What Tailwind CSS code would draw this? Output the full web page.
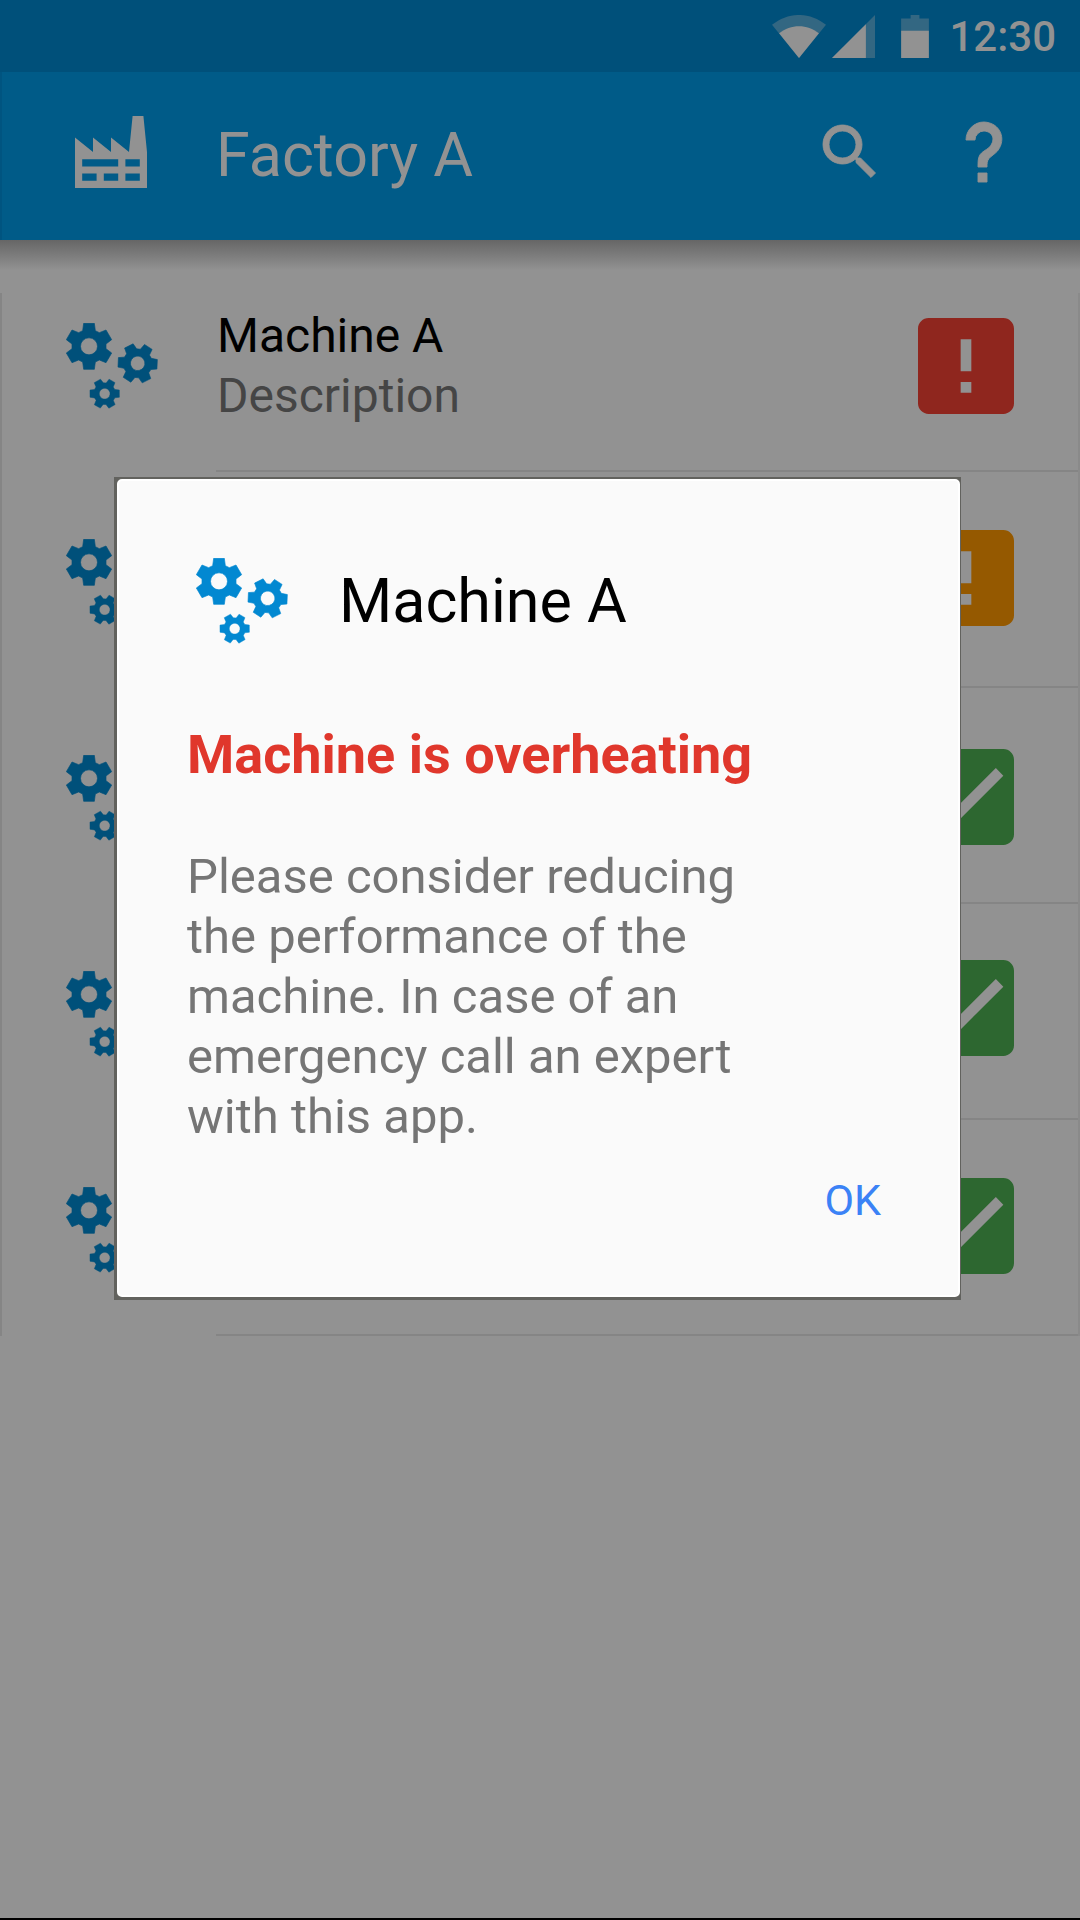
<!DOCTYPE html>
<html lang="en">
<head>
<meta charset="utf-8">
<meta name="viewport" content="width=device-width, initial-scale=1">
<title>Factory A</title>
<script src="https://cdn.jsdelivr.net/npm/@tailwindcss/browser@4"></script>
</head>
<body class="relative flex min-h-screen flex-col border-b-2 border-black bg-[#929292] font-['Roboto',sans-serif] text-black">

<!-- Shared symbols -->
<svg class="hidden" aria-hidden="true">
  <symbol id="gear" viewBox="-70 -70 140 140" overflow="visible">
    <path fill-rule="evenodd" stroke="currentColor" stroke-width="2" stroke-linejoin="round" d="M-16-69H16L19-47L31-41L51-49L68-20L51-7V7L68 20L51 49L31 41L19 47L16 69H-16L-19 47L-31 41L-51 49L-68 20L-51 7V-7L-68-20L-51-49L-31-41L-19-47ZM0-25.500A25.500 25.500 0 1 0 0 25.500A25.500 25.500 0 1 0 0-25.500Z"/>
  </symbol>
  <symbol id="gears" viewBox="198 130 276 258">
    <use href="#gear" x="-70" y="-70" width="140" height="140" transform="translate(267 200)"/>
    <use href="#gear" x="-70" y="-70" width="140" height="140" transform="translate(413 251) rotate(33) scale(.85)"/>
    <use href="#gear" x="-70" y="-70" width="140" height="140" transform="translate(314 342) rotate(30) scale(.64)"/>
  </symbol>
  <symbol id="alert" viewBox="3 3 18 18">
    <path d="M19 3H5c-1.100 0-2 .9-2 2v14c0 1.100.9 2 2 2h14c1.100 0 2-.9 2-2V5c0-1.100-.9-2-2-2zm-6 14h-2v-2h2v2zm0-4h-2V7h2v6z"/>
  </symbol>
  <symbol id="check" viewBox="3 3 18 18">
    <path d="M19 3H5c-1.110 0-2 .9-2 2v14c0 1.100.89 2 2 2h14c1.110 0 2-.9 2-2V5c0-1.100-.89-2-2-2zm-9 14l-5-5 1.410-1.410L10 14.170l7.590-7.590L19 8l-9 9z"/>
  </symbol>
</svg>

<header>
  <div class="flex h-[72px] items-center justify-end bg-[#00507a] pr-6 text-[#929292]">
    <svg class="h-[43px] w-[54px]" viewBox="0 0 160 127" fill="currentColor" aria-hidden="true">
      <path opacity=".35" d="M0 29C48-10 112-10 160 29L80 127Z"/>
      <path d="M21 54C56 26 104 26 139 54L80 127Z"/>
    </svg>
    <svg class="ml-[6px] h-[43px] w-[43px]" viewBox="0 0 127 127" fill="currentColor" aria-hidden="true">
      <path opacity=".35" d="M127 0V127H0Z"/>
      <path d="M100 27V127H0Z"/>
    </svg>
    <svg class="ml-[26px] h-[43px] w-[28px]" viewBox="0 0 82 127" fill="currentColor" aria-hidden="true">
      <path opacity=".35" d="M28 0H54V10H82V46H0V10H28Z"/>
      <path d="M0 46H82V127H0Z"/>
    </svg>
    <time class="ml-5 pt-0.5 text-[42px] font-medium leading-[48px]">12:30</time>
  </div>
  <div class="flex h-[168px] items-center border-l-2 border-[#005480] bg-[#005b88] pr-[60px] pb-2 pl-[73px] text-[#929292]">
    <svg class="h-[72px] w-[72px] shrink-0" viewBox="2 2 20 20" fill="currentColor" aria-hidden="true">
      <path d="M4,18V20H8V18H4M4,14V16H14V14H4M10,18V20H14V18H10M16,14V16H20V14H16M16,18V20H20V18H16M2,22V8L7,12V8L12,12V8L17,12L18,2H21L22,12V22H2Z"/>
    </svg>
    <h1 class="ml-[69px] flex-1 pt-1.5 text-[61px] leading-[72px]">Factory A</h1>
    <button type="button" aria-label="Search" class="h-[72px] w-[72px]">
      <svg class="h-full w-full" viewBox="0 0 24 24" fill="currentColor" stroke="currentColor" stroke-width=".3" aria-hidden="true">
        <path d="M15.500 14h-.79l-.28-.27C15.410 12.590 16 11.110 16 9.500 16 5.910 13.090 3 9.500 3S3 5.910 3 9.500 5.910 16 9.500 16c1.610 0 3.090-.59 4.230-1.570l.27.28v.79l5 4.990L20.490 19l-4.990-5zm-6 0C7.010 14 5 11.990 5 9.500S7.010 5 9.500 5 14 7.010 14 9.500 11.990 14 9.500 14z"/>
      </svg>
    </button>
    <button type="button" aria-label="Help" class="ml-[62px] h-[72px] w-[72px]">
      <svg class="h-full w-full" viewBox="0 0 24 24" fill="currentColor" stroke="currentColor" stroke-width=".3" aria-hidden="true">
        <path d="M10,19H13V22H10V19M12,2C17.350,2.220 19.680,7.620 16.500,11.670C15.670,12.670 14.330,13.330 13.670,14.170C13,15 13,16 13,17H10C10,15.330 10,13.920 10.670,12.920C11.330,11.920 12.670,11.330 13.500,10.670C15.920,8.430 15.320,5.260 12,5A3,3 0 0,0 9,8H6A6,6 0 0,1 12,2Z"/>
      </svg>
    </button>
  </div>
</header>

<main>
  <div class="h-[30px] bg-linear-to-b from-[#666666] to-[#929292]"></div>
  <ul class="pt-[23px] [&>li]:flex [&>li]:border-r-2 [&>li]:border-l-2 [&>li]:border-r-[#8a8a8a] [&>li]:border-l-[#858585] [&>li]:pl-16">
    <li class="h-[179px]">
      <svg class="mt-[30px] h-[86px] w-[92px] shrink-0 fill-current text-[#00507a]" aria-hidden="true"><use href="#gears"/></svg>
      <div class="ml-[58px] flex flex-1 items-start border-b-2 border-[#858585] pr-16 pl-px">
        <div class="flex-1 pt-[13px] text-[48px] leading-[60px]">
          <h2>Machine A</h2>
          <p class="text-[#454545]">Description</p>
        </div>
        <svg class="mt-[25px] h-24 w-24 fill-[#8f261e]" role="img" aria-label="Critical"><use href="#alert"/></svg>
      </div>
    </li>
    <li class="h-[216px]">
      <svg class="mt-[67px] h-[86px] w-[92px] shrink-0 fill-current text-[#00507a]" aria-hidden="true"><use href="#gears"/></svg>
      <div class="ml-[58px] flex flex-1 items-start justify-end border-b-2 border-[#858585] pt-[58px] pr-16">
        <svg class="h-24 w-24 fill-[#955900]" role="img" aria-label="Warning"><use href="#alert"/></svg>
      </div>
    </li>
    <li class="h-[216px]">
      <svg class="mt-[67px] h-[86px] w-[92px] shrink-0 fill-current text-[#00507a]" aria-hidden="true"><use href="#gears"/></svg>
      <div class="ml-[58px] flex flex-1 items-start justify-end border-b-2 border-[#858585] pt-[61px] pr-16">
        <svg class="h-24 w-24 fill-[#2d6730]" role="img" aria-label="Running"><use href="#check"/></svg>
      </div>
    </li>
    <li class="h-[216px]">
      <svg class="mt-[67px] h-[86px] w-[92px] shrink-0 fill-current text-[#00507a]" aria-hidden="true"><use href="#gears"/></svg>
      <div class="ml-[58px] flex flex-1 items-start justify-end border-b-2 border-[#858585] pt-[56px] pr-16">
        <svg class="h-24 w-24 fill-[#2d6730]" role="img" aria-label="Running"><use href="#check"/></svg>
      </div>
    </li>
    <li class="h-[216px]">
      <svg class="mt-[67px] h-[86px] w-[92px] shrink-0 fill-current text-[#00507a]" aria-hidden="true"><use href="#gears"/></svg>
      <div class="ml-[58px] flex flex-1 items-start justify-end border-b-2 border-[#858585] pt-[58px] pr-16">
        <svg class="h-24 w-24 fill-[#2d6730]" role="img" aria-label="Running"><use href="#check"/></svg>
      </div>
    </li>
  </ul>
</main>

<!-- Alert dialog over the list -->
<div class="absolute inset-x-0 top-[477px] flex pr-[119px] pl-[114px]">
  <section role="alertdialog" aria-modal="true" aria-labelledby="dialog-title" aria-describedby="dialog-text" class="flex-1 bg-[#62625e] pt-[2px] pr-px pb-[3px] pl-[3px]">
    <div class="flex flex-col rounded-[5px] border-2 border-white bg-[#fafafa] px-[68px] pt-[77px] pb-[71px]">
      <div class="flex items-center pl-[9px]">
        <svg class="h-[86px] w-[92px] fill-current text-[#0288d1]" aria-hidden="true"><use href="#gears"/></svg>
        <h2 id="dialog-title" class="ml-[51px] text-[61px] leading-[72px]">Machine A</h2>
      </div>
      <p class="mt-[79px] text-[54px] font-bold leading-[64px] text-[#e0372c]">Machine is overheating</p>
      <p id="dialog-text" class="mt-[60px] max-w-[600px] text-[49px] leading-[60px] text-[#757575]">Please consider reducing<br>the performance of the<br>machine. In case of an<br>emergency call an expert<br>with this app.</p>
      <button type="button" class="mt-[29px] self-end px-[9px] text-[43px] leading-[48px] text-[#3b82f6]">OK</button>
    </div>
  </section>
</div>

</body>
</html>
